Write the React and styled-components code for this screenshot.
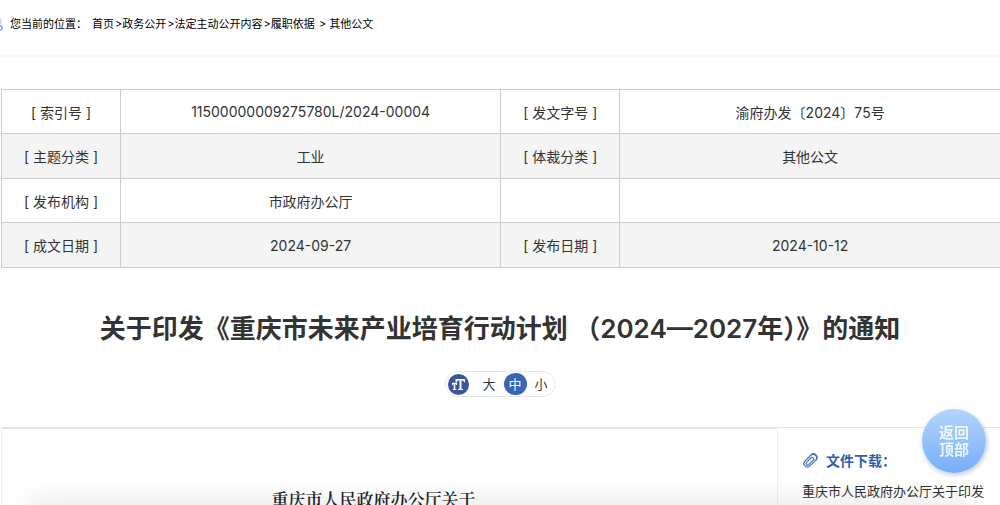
import styled, { createGlobalStyle } from "styled-components";

const GlobalStyle = createGlobalStyle`
  * {
    box-sizing: border-box;
  }
  body {
    margin: 0;
    height: 100vh;
    overflow: hidden;
    background: #fff;
    color: #333;
    font-family: Inter, "Noto Sans CJK SC", sans-serif;
    font-size: 14px;
  }
  a {
    color: inherit;
    text-decoration: none;
  }
`;

const Breadcrumb = styled.nav`
  display: flex;
  align-items: center;
  height: 57px;
  padding: 0 10px 10px;
  border-bottom: 2px solid #f4f4f4;
  color: #000;
  font-size: 11px;
  gap: 1px;
  white-space: pre;
`;

const PinIcon = styled.svg`
  flex: none;
  width: 14px;
  height: 16px;
  margin-left: -21px;
  margin-right: 6px;
`;

const CrumbLabel = styled.span`
  margin-right: 4px;
`;

const InfoTable = styled.table`
  width: calc(100% - 1px);
  margin: 32px 0 0 1px;
  border-collapse: collapse;
  table-layout: fixed;
  text-align: center;
`;

const LabelCol = styled.col`
  width: 119px;
`;

const Row = styled.tr`
  height: 44px;

  &:nth-child(even) {
    height: 45px;
    background: #f4f4f4;
  }
`;

const Label = styled.th`
  padding: 0;
  border: 1px solid #ccc;
  font-weight: 400;
`;

const Value = styled.td`
  padding: 0;
  border: 1px solid #ccc;
  border-right-width: ${(props) => (props.$last ? 0 : "1px")};
`;

const Title = styled.h1`
  margin: 41px 0 22px;
  font-size: 26px;
  font-weight: 600;
  line-height: 40px;
  text-align: center;
  white-space: nowrap;
`;

const SizePicker = styled.div`
  display: flex;
  align-items: center;
  width: fit-content;
  height: 26px;
  margin: 0 auto 30px;
  padding: 0 2px;
  border: 1px solid #e6e6e6;
  border-radius: 13px;
  gap: 3px;
`;

const SizeIcon = styled.svg`
  width: 21px;
  height: 21px;
  margin-right: 6px;
`;

const SizeButton = styled.button`
  width: 23px;
  height: 22px;
  padding: 0;
  border: 0;
  border-radius: 11px;
  background: ${(props) => (props.$active ? "#3765b8" : "transparent")};
  color: ${(props) => (props.$active ? "#fff" : "#333")};
  font-family: inherit;
  font-size: 13px;
  line-height: 22px;
`;

const Content = styled.main`
  display: flex;
`;

const Article = styled.article`
  flex: 1;
  margin-left: 1px;
  padding: 56px 32px 0 0;
  border: 1px solid #f0f0f0;
  border-top: 2px solid #e6e6e6;
  border-bottom: 0;
`;

const DocHeading = styled.h2`
  margin: 0;
  color: #222;
  font-family: "Noto Serif CJK SC", "Liberation Serif", "Noto Sans CJK SC", serif;
  font-size: 17px;
  font-weight: 600;
  line-height: 28px;
  text-align: center;
`;

const Sidebar = styled.aside`
  width: 222px;
  padding: 21px 16px 0 24px;
  border-top: 1px solid #e6e6e6;
`;

const DownloadTitle = styled.h3`
  display: flex;
  align-items: center;
  margin: 0 0 8px;
  color: #315fae;
  font-size: 14px;
  font-weight: 700;
  line-height: 24px;
  gap: 8px;
`;

const ClipIcon = styled.svg`
  width: 16px;
  height: 16px;
`;

const DownloadLink = styled.a`
  font-size: 13px;
  line-height: 20px;
  white-space: nowrap;
`;

const BackToTop = styled.button`
  position: fixed;
  right: 14px;
  bottom: 32px;
  width: 64px;
  height: 64px;
  padding: 0;
  border: 0;
  border-radius: 50%;
  background: linear-gradient(#b2d5fc, #76aef8);
  box-shadow: 1px 2px 5px rgba(80, 120, 180, 0.4);
  color: #eef6ff;
  font-family: inherit;
  font-size: 15px;
  font-weight: 600;
  line-height: 17px;
`;

const BottomShade = styled.div`
  position: fixed;
  left: 30px;
  right: 30px;
  bottom: -12px;
  height: 10px;
  box-shadow: 0 0 30px 2px rgba(0, 0, 0, 0.16);
  pointer-events: none;
`;

const crumbs = ["首页", "政务公开", "法定主动公开内容", "履职依据"];

const rows = [
  ["索引号", "11500000009275780L/2024-00004", "发文字号", "渝府办发〔2024〕75号"],
  ["主题分类", "工业", "体裁分类", "其他公文"],
  ["发布机构", "市政府办公厅", "", ""],
  ["成文日期", "2024-09-27", "发布日期", "2024-10-12"],
];

const sizes = ["大", "中", "小"];

const App = () => {
  return (
    <>
      <GlobalStyle />
      <Breadcrumb>
        <PinIcon viewBox="0 0 14 16" fill="none">
          <path d="M6 14C1 8 2 2 7 2s6 4 4 8" stroke="#c9d8ee" strokeWidth="1.5" />
          <circle cx="11" cy="13" r="2" stroke="#7da6dc" strokeWidth="1.5" />
        </PinIcon>
        <CrumbLabel>您当前的位置：</CrumbLabel>
        {crumbs.map((crumb, i) => (
          <span key={crumb}>
            {i > 0 && ">"}
            <a href="#">{crumb}</a>
          </span>
        ))}
        <span> &gt; 其他公文</span>
      </Breadcrumb>

      <InfoTable>
        <colgroup>
          <LabelCol />
          <col />
          <LabelCol />
          <col />
        </colgroup>
        <tbody>
          {rows.map(([label, value, label2, value2]) => (
            <Row key={label}>
              <Label scope="row">[ {label} ]</Label>
              <Value>{value}</Value>
              <Label scope="row">{label2 && `[ ${label2} ]`}</Label>
              <Value $last>{value2}</Value>
            </Row>
          ))}
        </tbody>
      </InfoTable>

      <Title>关于印发《重庆市未来产业培育行动计划 （2024—2027年）》的通知</Title>

      <SizePicker>
        <SizeIcon viewBox="0 0 21 21">
          <circle cx="10.5" cy="10.5" r="10.5" fill="#3c549c" />
          <path
            d="M7.500 5h9.500v3.200h-1L15.200 6.500H13.500V14.500l1.500.500v1h-5v-1l1.500-.500V6.500H9.800L9 8.200H7.500zM4 8.800h5v2.200h-.8L7.800 10h-.5v4.800l1 .4v.8H4.700v-.8l1-.4V10h-.5L4.800 11H4z"
            fill="#fff"
          />
        </SizeIcon>
        {sizes.map((size) => (
          <SizeButton key={size} type="button" $active={size === "中"}>
            {size}
          </SizeButton>
        ))}
      </SizePicker>

      <Content>
        <Article>
          <DocHeading>重庆市人民政府办公厅关于</DocHeading>
        </Article>
        <Sidebar>
          <DownloadTitle>
            <ClipIcon viewBox="0 0 16 16" fill="none" stroke="#4a74bb" strokeWidth="1.2" strokeLinecap="round">
              <g transform="rotate(45 8 8)">
                <path d="M11.500 3v8.500a3.500 3.500 0 0 1-7 0V3a3.500 3.500 0 0 1 7 0" />
                <path d="M6.500 11V4.500a1.700 1.700 0 0 1 3.200 0V11.500a1.600 1.600 0 0 1-3.200 0" />
                <path d="M4.500 3.500C4.500-1 11.500-1 11.500 3.500" />
              </g>
            </ClipIcon>
            文件下载：
          </DownloadTitle>
          <DownloadLink href="#">重庆市人民政府办公厅关于印发</DownloadLink>
        </Sidebar>
      </Content>

      <BottomShade />
      <BackToTop type="button">
        返回
        <br />
        顶部
      </BackToTop>
    </>
  );
};

export default App;
